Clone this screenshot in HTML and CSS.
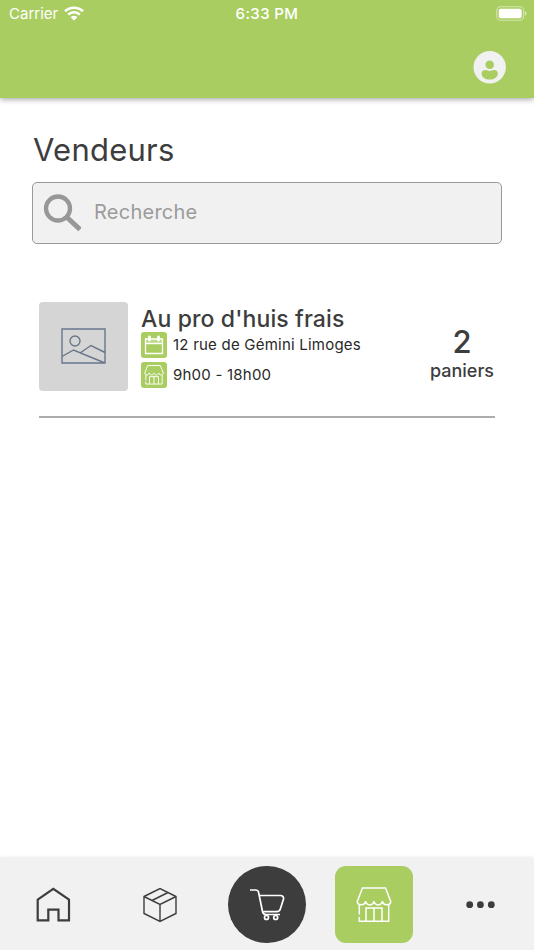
FILE: index.html
```html
<!DOCTYPE html>
<html lang="fr">
<head>
<meta charset="utf-8">
<title>Vendeurs</title>
<link rel="stylesheet" href="styles.css">
</head>
<body>
<svg class="defs" width="0" height="0" aria-hidden="true">
  <symbol id="store" viewBox="0 0 36 36">
    <path d="M6.500 1H29.500L34.700 14.500C34.700 18.600 27.200 19.200 26.400 14.200C25.400 19.200 19 19.200 18 14.200C17 19.200 10.600 19.200 9.600 14.200C8.800 19.200 1.300 18.600 1.300 14.500Z M3.300 18V27.500M3.300 30V34.300H32.700V18M10 34V21H26V34M18 21V34"/>
  </symbol>
</svg>
<header class="header">
  <div class="status">
    <div class="carrier"><span>Carrier</span>
      <svg class="wifi" viewBox="0 0 20 15"><path d="M1 5.300A13 13 0 0 1 19 5.300M4.200 8.600A8.400 8.400 0 0 1 15.800 8.600" fill="none" stroke="#fff" stroke-width="2.600"/><path d="M10 14.500L6.600 11.200A4.900 4.900 0 0 1 13.400 11.200Z" fill="#fff"/></svg>
    </div>
    <div class="time">6:33 PM</div>
    <svg class="battery" viewBox="0 0 32 16"><rect x="1.700" y=".7" width="27" height="13.600" rx="4" fill="none" stroke="#fff" stroke-opacity=".5" stroke-width="1.100"/><rect x="3.700" y="2.700" width="23" height="9.600" rx="2" fill="#fff"/><path d="M30 5Q33 7.500 30 10Z" fill="#fff" fill-opacity=".6"/></svg>
  </div>
  <svg class="avatar" viewBox="0 0 33 33"><circle cx="16.700" cy="16.200" r="16.200" fill="#f1f1f1"/><circle cx="16.700" cy="13.700" r="4.300" fill="#a9cd60"/><path d="M8.600 22.700C8.600 19.700 10.700 19 12.600 19C14.200 19 14.700 19.900 16.700 19.900S19.200 19 20.800 19C22.700 19 24.800 19.700 24.800 22.700C24.800 26.500 20.700 28.600 16.700 28.600S8.600 26.500 8.600 22.700Z" fill="#a9cd60"/></svg>
</header>
<main class="content">
  <h1 class="title">Vendeurs</h1>
  <div class="search">
    <svg class="glass" viewBox="0 0 38 38"><circle cx="15" cy="14.500" r="12" fill="none" stroke="#979797" stroke-width="4.300"/><path d="M23 22.500L37 35.500" stroke="#979797" stroke-width="5"/></svg>
    <span class="placeholder">Recherche</span>
  </div>
  <article class="vendor">
    <div class="thumb">
      <svg class="picture" viewBox="0 0 45 36"><path d="M1 1H44V35H1ZM1 28.500L12.500 22L44 35M19 25L30 17.500L44 24.500" /><circle cx="14" cy="13" r="5"/></svg>
    </div>
    <div class="details">
      <h2 class="name">Au pro d'huis frais</h2>
      <div class="info"><span class="tag"><svg class="calendar" viewBox="0 0 20 20"><path d="M1.500 4H18.500V18.500H1.500ZM1.500 8.500H18.500" fill="none" stroke="#fff" stroke-width="1.300"/><path d="M1.500 4H18.500V8H1.500Z" fill="#fff" fill-opacity=".25"/><path d="M5.500 2V5M14.500 2V5" stroke="#fff" stroke-width="2.800" stroke-linecap="round"/></svg></span><span class="address">12 rue de Gémini Limoges</span></div>
      <div class="info"><span class="tag"><svg class="shop"><use href="#store"/></svg></span><span class="hours">9h00 - 18h00</span></div>
    </div>
    <div class="baskets"><strong class="count">2</strong><span class="unit">paniers</span></div>
  </article>
</main>
<nav class="tabs">
  <a class="tab"><svg class="home" viewBox="0 0 36 36"><path d="M2.700 12.700L18.300 1.800L34 12.700V33.400H23.500V22.700H13.300V33.400H2.700Z"/></svg></a>
  <a class="tab"><svg class="box" viewBox="0 0 36 36"><path d="M2 9.500L18 1.500L34 9.500V26.500L18 34.500L2 26.500ZM2 9.500L18 17.500L34 9.500M10 13.500L26 5.500M18 17.500V34.500"/></svg></a>
  <a class="tab"><span class="button round"><svg class="cart" viewBox="0 0 36 34"><path d="M1 2H6.500Q9 2 9.500 4L13.500 23.500Q14 26.500 17 26.500H31M11 7.500H32Q35 8 34.500 11L31.500 20.500Q30.600 23.700 28 23.700H14.500"/><circle cx="17.500" cy="29.500" r="2"/><circle cx="26.700" cy="29.500" r="2"/></svg></span></a>
  <a class="tab"><span class="button square"><svg class="store"><use href="#store"/></svg></span></a>
  <a class="tab"><svg class="more" viewBox="0 0 30 8"><circle cx="3.700" cy="3.700" r="3.400"/><circle cx="14.400" cy="3.700" r="3.400"/><circle cx="25.300" cy="3.700" r="3.400"/></svg></a>
</nav>
</body>
</html>
```
FILE: styles.css
```css
* { box-sizing: border-box; }
body {
  margin: 0;
  height: 950px;
  display: flex;
  flex-direction: column;
  background: #fff;
  color: #3d3d3d;
  font-family: Inter, "Liberation Sans", sans-serif;
  overflow: hidden;
}
svg { display: block; flex: none; }
.defs { position: absolute; }
.header {
  height: 98px;
  flex: none;
  background: #a9cd60;
  box-shadow: 0 1px 6px rgba(0, 0, 0, .4);
  color: #fff;
}
.status {
  height: 28px;
  padding: 0 7px 0 9px;
  display: grid;
  grid-template-columns: 1fr auto 1fr;
  align-items: center;
  font-size: 15px;
  line-height: 28px;
}
.carrier { display: flex; align-items: center; gap: 6px; letter-spacing: 0; }
.wifi { width: 20px; height: 15px; margin-top: -2px; }
.time { font-weight: 500; letter-spacing: .4px; margin-left: -2px; }
.battery { width: 32px; height: 16px; justify-self: end; }
.avatar { width: 33px; height: 33px; margin: 23px 28px 0 auto; }
.content { flex: 1; padding: 32px 32px 0; }
.title { margin: 0 0 12px 1px; font-size: 31px; line-height: 40px; font-weight: 400; letter-spacing: .25px; }
.search {
  height: 62px;
  display: flex;
  align-items: center;
  gap: 13px;
  padding-left: 10px;
  border: 1px solid #999;
  border-radius: 5px;
  background: #f1f1f1;
  color: #9b9b9b;
}
.glass { width: 38px; height: 38px; }
.placeholder { font-size: 20px; line-height: 28px; margin-top: -2px; letter-spacing: .25px; }
.vendor {
  display: flex;
  margin: 58px 7px 0;
  height: 116px;
  border-bottom: 2px solid #acacac;
}
.thumb {
  width: 89px;
  height: 89px;
  display: grid;
  place-items: center;
  padding-bottom: 2px;
  border-radius: 4px;
  background: #d5d5d5;
}
.picture { width: 45px; height: 36px; fill: none; stroke: #69768a; stroke-width: 1.400; }
.details { flex: 1; padding-left: 13px; white-space: nowrap; }
.name { margin: 2px 0 -2px; font-size: 23px; line-height: 30px; font-weight: 500; letter-spacing: .12px; }
.info { display: flex; align-items: center; gap: 6px; margin-bottom: 4px; color: #292929; font-size: 15px; line-height: 26px; letter-spacing: .22px; }
.tag { width: 26px; height: 26px; display: grid; place-items: center; border-radius: 3px; background: #a9cd60; }
.calendar { width: 20px; height: 20px; }
.shop { width: 20px; height: 20px; fill: none; stroke: #fff; stroke-width: 1.700; }
.baskets { width: 66px; display: flex; flex-direction: column; align-items: center; padding-top: 22px; }
.count { font-size: 31px; line-height: 36px; font-weight: 500; }
.unit { font-size: 18px; line-height: 22px; font-weight: 500; }
.tabs {
  height: 92px;
  display: grid;
  grid-template-columns: repeat(5, 1fr);
  background: #f1f1f1;
  box-shadow: 0 -1px 3px rgba(0, 0, 0, .08);
}
.tab { display: grid; place-items: center; padding-top: 1px; }
.home, .box, .store { width: 36px; height: 36px; fill: none; stroke: #3d3d3d; }
.home { stroke-width: 2.200; }
.box { stroke-width: 1.400; }
.button { width: 77.500px; height: 77.500px; display: grid; place-items: center; }
.round { border-radius: 50%; background: #3d3d3d; }
.square { border-radius: 11px; background: #a9cd60; }
.cart { width: 36px; height: 34px; fill: none; stroke: #fff; stroke-width: 1.700; }
.store { stroke: #fff; stroke-width: 1.500; }
.more { width: 30px; height: 8px; fill: #3d3d3d; }
```
